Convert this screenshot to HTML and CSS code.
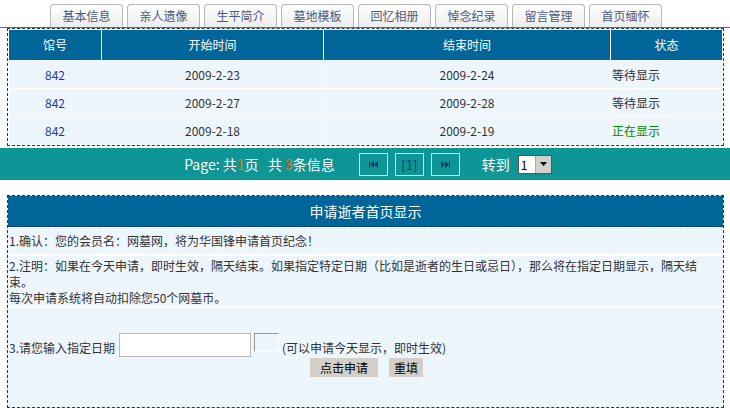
FILE: index.html
```html
<!DOCTYPE html>
<html lang="zh">
<head>
    <meta charset="UTF-8">
    <title>首页缅怀</title>
    <link rel="stylesheet" href="styles.css">
</head>
<body>
    <!-- 顶部标签 -->
    <div class="tabs">
        <a class="tab" href="#">基本信息</a>
        <a class="tab" href="#">亲人遗像</a>
        <a class="tab" href="#">生平简介</a>
        <a class="tab" href="#">墓地模板</a>
        <a class="tab" href="#">回忆相册</a>
        <a class="tab" href="#">悼念纪录</a>
        <a class="tab" href="#">留言管理</a>
        <a class="tab" href="#">首页缅怀</a>
    </div>

    <div class="box">
        <table class="list">
            <tr class="head">
                <th class="c1">馆号</th>
                <th class="c2">开始时间</th>
                <th class="c3">结束时间</th>
                <th class="c4">状态</th>
            </tr>
            <tr>
                <td class="num">842</td>
                <td>2009-2-23</td>
                <td>2009-2-24</td>
                <td class="state">等待显示</td>
            </tr>
            <tr>
                <td class="num">842</td>
                <td>2009-2-27</td>
                <td>2009-2-28</td>
                <td class="state">等待显示</td>
            </tr>
            <tr>
                <td class="num">842</td>
                <td>2009-2-18</td>
                <td>2009-2-19</td>
                <td class="state on">正在显示</td>
            </tr>
        </table>
    </div>

    <!-- 分页 -->
    <div class="pager">
        <span class="info">Page: 共<b>1</b>页&nbsp;&nbsp; 共 <b>3</b>条信息</span>
        <span class="pbtn first"><svg width="9" height="7" viewBox="0 0 9 7"><rect x="0" y="0" width="1" height="7"/><path d="M5 0 L1 3.5 L5 7Z"/><path d="M9 0 L5 3.5 L9 7Z"/></svg></span>
        <span class="pbtn cur">[1]</span>
        <span class="pbtn last"><svg width="9" height="7" viewBox="0 0 9 7"><path d="M0 0 L4 3.5 L0 7Z"/><path d="M4 0 L8 3.5 L4 7Z"/><rect x="8" y="0" width="1" height="7"/></svg></span>
        <span class="goto">转到</span>
        <span class="sel"><span class="selv">1</span><span class="arrow"><svg width="7" height="4" viewBox="0 0 7 4"><path d="M0 0 L7 0 L3.5 4Z"/></svg></span></span>
    </div>

    <div class="box apply">
        <div class="title">申请逝者首页显示</div>
        <div class="row r1">1.确认：您的会员名：网墓网，将为华国锋申请首页纪念！</div>
        <div class="row r2">2.注明：如果在今天申请，即时生效，隔天结束。如果指定特定日期（比如是逝者的生日或忌日），那么将在指定日期显示，隔天结束。<br>每次申请系统将自动扣除您50个网墓币。</div>
        <div class="row r3">
            <div class="line">
                <span>3.请您输入指定日期</span>
                <span class="date"></span>
                <span class="cal"></span>
                <span>(可以申请今天显示，即时生效)</span>
            </div>
            <div class="btns">
                <button class="btn b1">点击申请</button>
                <button class="btn b2">重填</button>
            </div>
        </div>
    </div>
</body>
</html>
```

FILE: styles.css
```css
body{
  margin: 0;
  background-color: #fff;
  font-family: "Noto Sans CJK SC", "DejaVu Sans", sans-serif;
  font-size: 12px;
  color: #333;
}

.tabs{ /* 标签行 */
  display: flex;
  gap: 4px;
  padding: 4px 0 0 50px;
  height: 23px;
  border-bottom: 1px solid #56698f;
}

.tab{
  width: 71px;
  height: 22px;
  line-height: 22px;
  text-align: center;
  text-decoration: none;
  color: #4d5a7a;
  font-size: 12px;
  border: 1px solid #b8b8b8;
  border-bottom: none;
  border-radius: 4px 4px 0 0;
  background: linear-gradient(#ffffff, #ececec);
}

.box{ /* 虚线外框 */
  margin: 0 6px 0 7px;
  border: 1px dashed #1a3566;
  padding: 1px;
}

.list{
  width: 100%;
  border-collapse: collapse;
  table-layout: fixed;
  background-color: #eef6fd;
}

.list th{
  background-color: #006699;
  color: #fff;
  font-weight: normal;
  height: 30px;
  padding: 0;
  line-height: 16px;
  border-left: 1px solid #fff;
}

.list th.c1{ border-left: none; width: 92px; }
.list th.c2{ width: 221px; }
.list th.c3{ width: 286px; }

.list td{
  height: 27px;
  padding: 0;
  line-height: 16px;
  text-align: center;
  border-top: 1px solid #fff;
  border-left: 1px solid #f4f9fe;
  color: #333;
}

.list td.num{ color: #1a3a99; border-left: none; }
.list td.state{ text-align: left; padding-left: 1px; }
.list td.on{ color: #008800; }

.pager{ /* 分页条 */
  margin-top: 2px;
  height: 32px;
  background-color: #0e9696;
  display: flex;
  align-items: center;
  justify-content: center;
  color: #fff;
  padding-left: 6px;
}

.info{ font-size: 14px; }

.pager b{
  font-weight: normal;
  color: #ff6a00;
}

.pbtn{
  width: 27px;
  height: 21px;
  border: 1px solid #cfe8e8;
  display: flex;
  align-items: center;
  justify-content: center;
  margin-left: 7px;
  color: #0a3d6e;
  fill: #0a3d6e;
  font-size: 13px;
}

.pbtn.first{ margin-left: 24px; }

.goto{ margin-left: 22px; font-size: 14px; }

.sel{
  margin-left: 8px;
  display: flex;
  height: 17px;
  border: 1px solid #555;
  background-color: #fff;
  color: #000;
}

.selv{ width: 14px; line-height: 17px; padding-left: 2px; }

.arrow{
  width: 15px;
  background-color: #d4d0c8;
  border-left: 1px solid #aaa;
  display: flex;
  align-items: center;
  justify-content: center;
  fill: #000;
}

.apply{
  margin-top: 15px;
  padding: 0;
  background-color: #eef6fd;
}

.title{
  background-color: #006699;
  color: #fff;
  font-size: 14px;
  text-align: center;
  height: 30px;
  line-height: 30px;
  border-bottom: 1px dashed #1a3566;
}

.row{
  color: #333;
  line-height: 16px;
}

.r1{
  padding: 6px 0 5px 1px;
  border-bottom: 2px solid #fff;
}

.r2{
  padding: 2px 14px 0 1px;
  border-bottom: 2px solid #fff;
}

.r3{
  padding: 25px 0 30px 1px;
}

.line{
  display: flex;
  align-items: flex-start;
}

.line span:first-child{ margin-top: 7px; }
.line span:last-child{ margin-top: 7px; }

.date{
  width: 130px;
  height: 22px;
  margin-left: 4px;
  border: 1px solid #bbb;
  background-color: #fff;
}

.cal{
  width: 23px;
  height: 17px;
  margin: 0 3px 0 3px;
  border: 1px solid #999;
  border-right: 1px solid #fff;
  border-bottom: 1px solid #fff;
}

.btns{
  display: flex;
  gap: 11px;
  padding-left: 301px;
  margin-top: 1px;
}

.btn{
  font-family: "Noto Sans CJK SC", sans-serif;
  font-size: 12px;
  color: #000;
  background-color: #d4d0c8;
  border: none;
  height: 19px;
  line-height: 19px;
  padding: 0;
}

.b1{ width: 68px; }
.b2{ width: 34px; }
```
